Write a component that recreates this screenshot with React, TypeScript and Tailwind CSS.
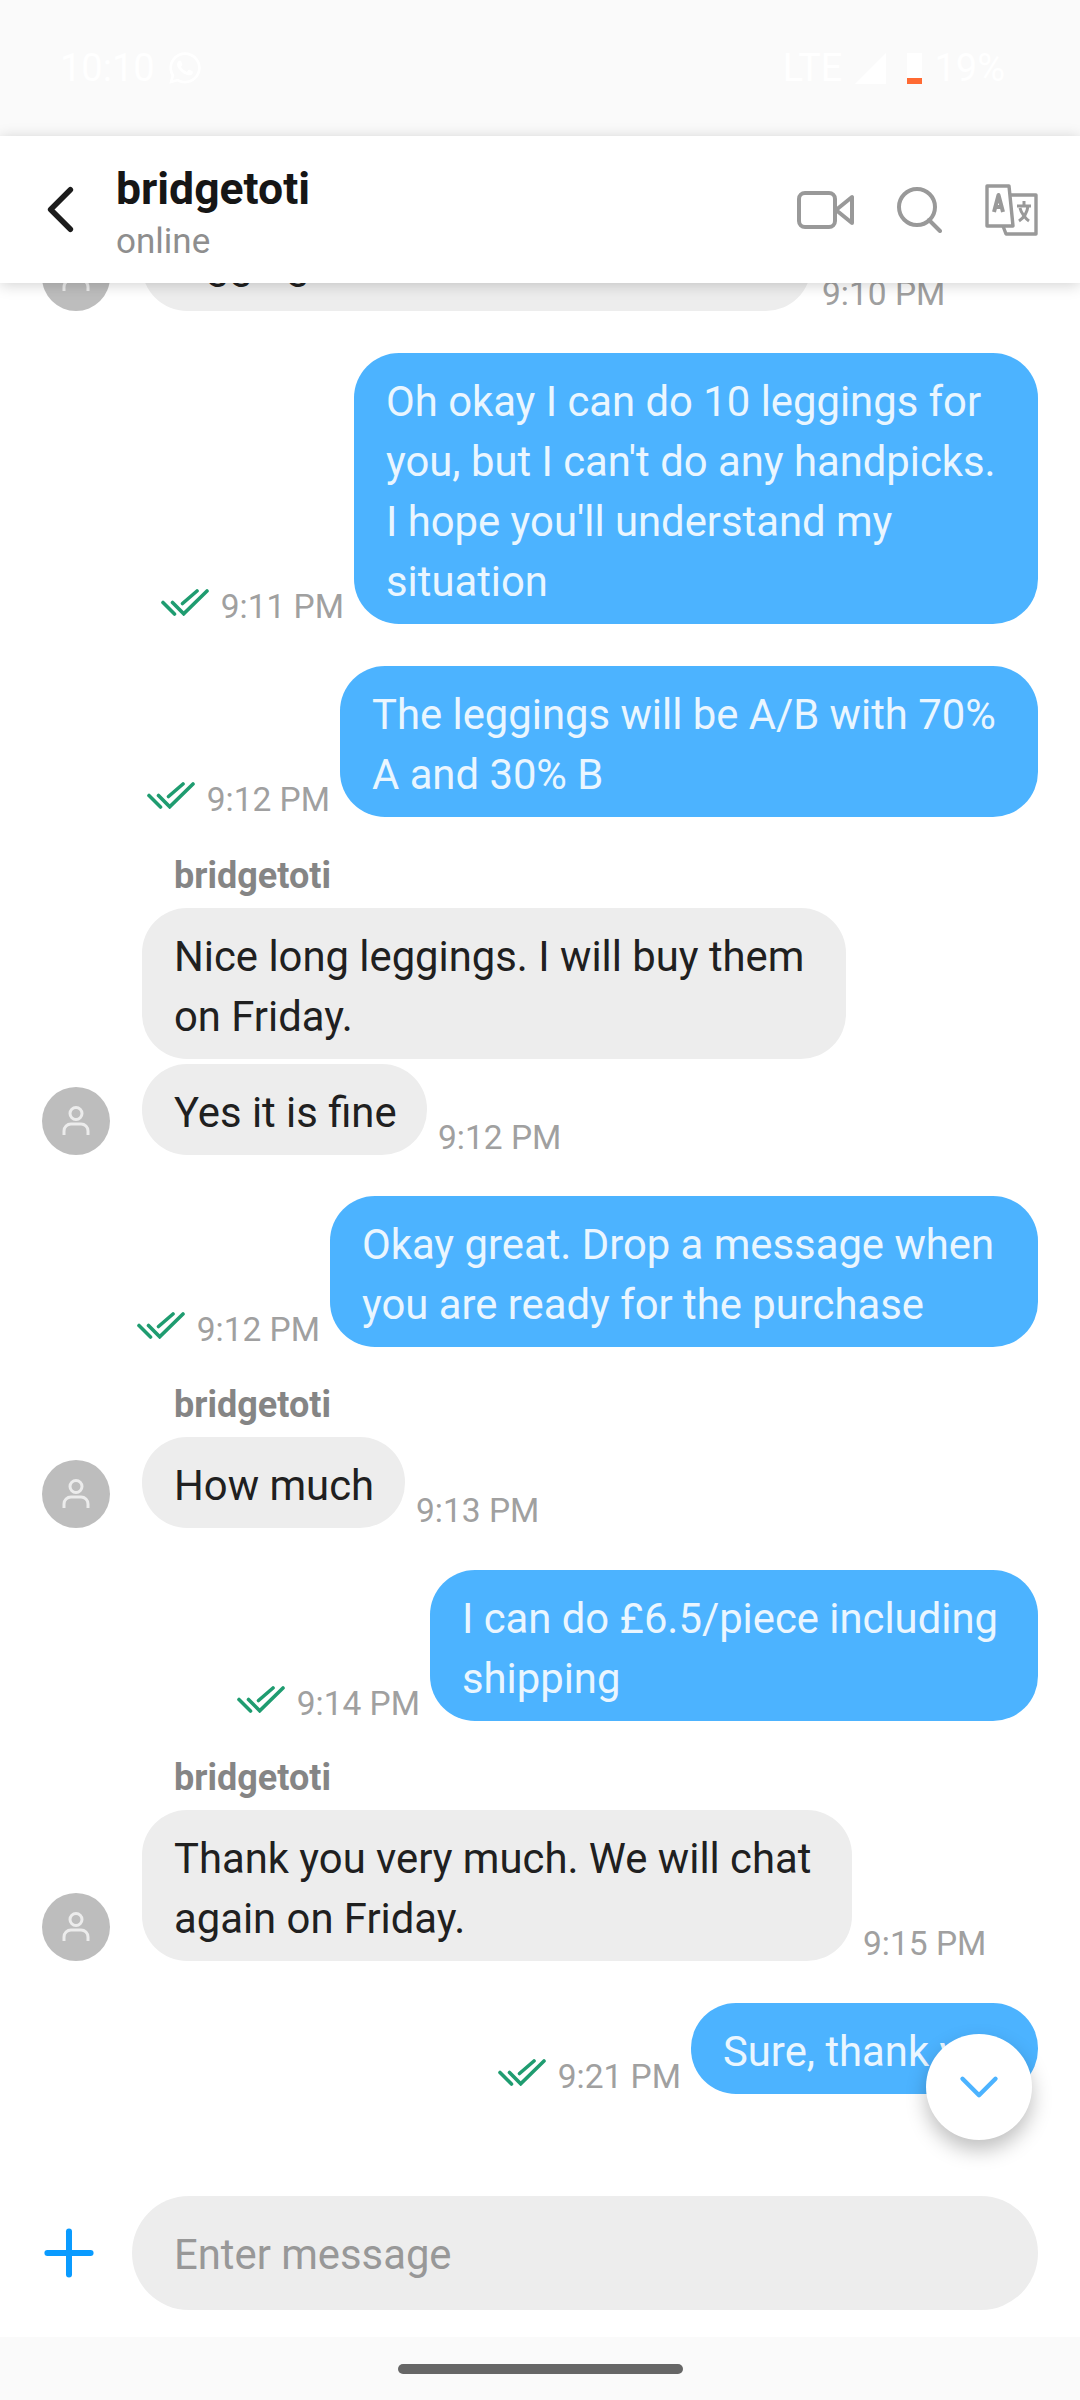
import { ChevronDown, ChevronLeft, Plus } from 'lucide-react';
import { FaWhatsapp } from 'react-icons/fa';

function Ticks() {
  return (
    <svg width="48" height="27" viewBox="-1 -1 48 27" fill="none" stroke="#1f9c70" strokeWidth="3.6" strokeLinecap="round" strokeLinejoin="miter" className="shrink-0">
      <path d="M1 12.5 12.5 24" />
      <path d="M10.5 12.5 21.7 23.8 45 1" />
      <path d="M20.5 13.5 35 1" />
    </svg>
  );
}

function Avatar() {
  return (
    <div className="flex h-[68px] w-[68px] shrink-0 items-center justify-center rounded-full bg-[#bdbdbd]">
      <svg width="28" height="30" viewBox="0 0 28 30" fill="none" stroke="#ececec" strokeWidth="3">
        <circle cx="14" cy="7.5" r="6" />
        <path d="M2 29v-4a7 7 0 0 1 7-7h10a7 7 0 0 1 7 7v4" />
      </svg>
    </div>
  );
}

function Sent({ time, width, top, children }: { time: string; width: string; top: string; children: React.ReactNode }) {
  return (
    <div className={`flex items-end justify-end pr-[42px] ${top}`}>
      <div className="mr-[10px] flex items-center gap-[12px]">
        <div className="mb-[8px]"><Ticks /></div>
        <span className="text-[33.5px] leading-[34px] text-[#a0a0a0]">{time}</span>
      </div>
      <div className={`${width} whitespace-nowrap rounded-[45px] bg-[#4cb3ff] pb-[12px] pl-[32px] pt-[19px] text-[41.8px] leading-[60px] text-[#eaf6ff]`}>
        {children}
      </div>
    </div>
  );
}

function Received({ time, width, top, avatar, label, children }: {
  time?: string; width: string; top: string; avatar?: boolean; label?: boolean; children: React.ReactNode;
}) {
  return (
    <div className={top}>
      {label && <div className="mb-[13px] pl-[174px] text-[36px] font-bold leading-[38px] text-[#858585]">bridgetoti</div>}
      <div className="flex items-end">
        <div className="w-[142px] shrink-0 pl-[42px]">{avatar && <Avatar />}</div>
        <div className={`${width} whitespace-nowrap rounded-[45px] bg-[#ededed] pb-[12px] pl-[32px] pt-[19px] text-[41.8px] leading-[60px] text-[#202020]`}>
          {children}
        </div>
        {time && <span className="ml-[11px] text-[33.5px] leading-[34px] text-[#a0a0a0]">{time}</span>}
      </div>
    </div>
  );
}

export default function App() {
  return (
    <div className="flex h-[2400px] w-[1080px] flex-col overflow-hidden bg-white font-['Roboto',sans-serif]">
      {/* status bar, white on near white like the phone shows it */}
      <div className="flex h-[136px] shrink-0 items-start justify-between bg-[#fafafa] pl-[60px] pr-[75px] pt-[46px] text-[38px] leading-[44px] text-white">
        <div className="flex items-center gap-[12px]">
          <span>10:10</span>
          <FaWhatsapp size={36} color="#ffffff" />
        </div>
        <div className="flex items-center">
          <span>LTE</span>
          <svg width="31" height="31" viewBox="0 0 31 31" className="ml-[13px]"><path d="M31 0v31H0z" fill="#ffffff" /></svg>
          <div className="relative ml-[21px] h-[31px] w-[15px] bg-white">
            <div className="absolute bottom-0 h-[6px] w-full bg-[#ff6a33]" />
          </div>
          <span className="ml-[12px]">19%</span>
        </div>
      </div>

      {/* header */}
      <div className="relative z-10 flex h-[147px] shrink-0 items-center bg-white shadow-[0_2px_14px_rgba(0,0,0,0.18)]">
        <ChevronLeft size={79} strokeWidth={1.67} color="#1c1c1c" className="ml-[21px] shrink-0" />
        <div className="ml-[16px] flex-1 pt-[6px]">
          <div className="text-[44.5px] font-bold leading-[50px] text-[#161616]">bridgetoti</div>
          <div className="mt-[8px] text-[35px] leading-[40px] text-[#8e8e8e]">online</div>
        </div>
        <div className="mr-[42px] flex items-center gap-[43px]">
          <svg width="57" height="38" viewBox="0 0 57 38" fill="none" stroke="#999999" strokeWidth="4" strokeLinejoin="round">
            <rect x="2" y="2" width="36" height="34" rx="6" />
            <path d="M39 19 55 6v26z" />
          </svg>
          <svg width="45" height="46" viewBox="0 0 45 46" fill="none" stroke="#999999" strokeWidth="4" strokeLinecap="round">
            <circle cx="20" cy="20" r="18" />
            <path d="M32 33l11 11" />
          </svg>
          <svg width="53" height="52" viewBox="0 0 53 52" fill="none" stroke="#999999" strokeWidth="3.4" strokeLinejoin="round">
            <path d="M2 2h22l4 40H2z" />
            <path d="M25 11h26v39H21l-3-8" />
            <path d="M9 28l4.500-17 4.500 17M10.500 23h6" strokeWidth="4" />
            <path d="M32 22h14M39 17v5M43 22c-1 8-6 13-9 15M35 24c1 5 6 11 9 13" strokeWidth="3" />
          </svg>
        </div>
      </div>

      {/* messages, scrolled so the first row is cut by the header */}
      <div className="relative flex-1 overflow-hidden">
        <div className="absolute inset-x-0 top-[-63px]">
          <Received time="9:10 PM" width="w-[669px]" top="" avatar>
            <span className="block h-[60px] overflow-hidden leading-[50px]">leggings.</span>
          </Received>
          <Sent time="9:11 PM" width="w-[684px]" top="mt-[42px]">
            Oh okay I can do 10 leggings for<br />you, but I can't do any handpicks.<br />I hope you'll understand my<br />situation
          </Sent>
          <Sent time="9:12 PM" width="w-[698px]" top="mt-[42px]">
            The leggings will be A/B with 70%<br />A and 30% B
          </Sent>
          <Received width="w-[704px]" top="mt-[40px]" label>
            Nice long leggings. I will buy them<br />on Friday.
          </Received>
          <Received time="9:12 PM" width="w-[285px]" top="mt-[5px]" avatar>
            Yes it is fine
          </Received>
          <Sent time="9:12 PM" width="w-[708px]" top="mt-[41px]">
            Okay great. Drop a message when<br />you are ready for the purchase
          </Sent>
          <Received time="9:13 PM" width="w-[263px]" top="mt-[39px]" avatar label>
            How much
          </Received>
          <Sent time="9:14 PM" width="w-[608px]" top="mt-[42px]">
            I can do £6.5/piece including<br />shipping
          </Sent>
          <Received time="9:15 PM" width="w-[710px]" top="mt-[38px]" avatar label>
            Thank you very much. We will chat<br />again on Friday.
          </Received>
          <Sent time="9:21 PM" width="w-[347px]" top="mt-[42px]">
            Sure, thank you
          </Sent>
        </div>

        {/* input */}
        <div className="absolute inset-x-0 bottom-0 flex h-[141px] items-start bg-white">
          <Plus size={74} strokeWidth={1.95} color="#0a9bff" className="ml-[32px] mt-[20px] shrink-0" />
          <div className="ml-[26px] mr-[42px] flex h-[114px] flex-1 items-center rounded-full bg-[#ededed] pl-[42px] pt-[4px] text-[41.8px] text-[#989898]">
            Enter message
          </div>
        </div>

        {/* jump to latest */}
        <button className="absolute bottom-[197px] right-[48px] flex h-[106px] w-[106px] items-center justify-center rounded-full bg-white shadow-[0_10px_20px_rgba(0,0,0,0.25)]">
          <ChevronDown size={66} strokeWidth={1.6} color="#4cb3ff" />
        </button>
      </div>

      {/* gesture bar */}
      <div className="flex h-[63px] shrink-0 justify-center bg-[#fafafa] pt-[27px]">
        <div className="h-[10px] w-[285px] rounded-full bg-[#666666]" />
      </div>
    </div>
  );
}
